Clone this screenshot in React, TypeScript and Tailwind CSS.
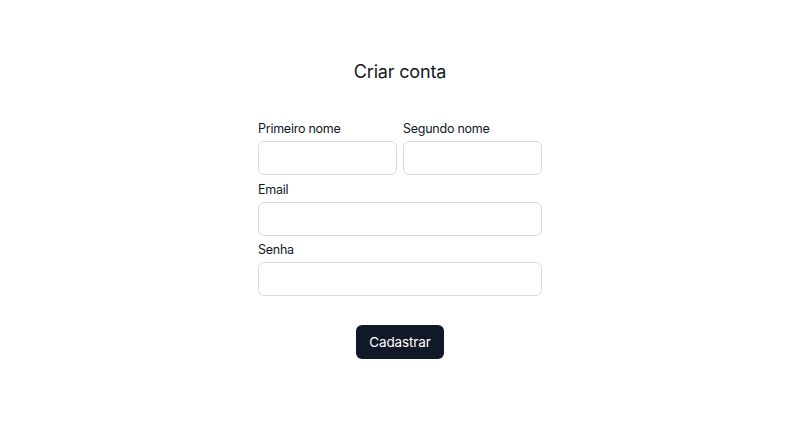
import React from 'react';

function Field({ label, type = 'text' }: { label: string; type?: string }) {
  return (
    <label className="flex flex-col">
      <span className="text-[12.5px] leading-5 tracking-[-0.02em] text-[#0f172a]">{label}</span>
      <input
        type={type}
        className="mt-0.5 h-[34px] w-full rounded-md border border-[#d5dce6] bg-white px-3 text-sm outline-none"
      />
    </label>
  );
}

export default function App() {
  return (
    <div className="min-h-screen bg-white font-['Inter',sans-serif] text-[#111827]">
      <div className="flex flex-col items-center pt-[58px]">
        <h1 className="text-lg leading-7 tracking-[-0.01em]">Criar conta</h1>

        <form className="mt-[33px] flex w-[284px] flex-col gap-[4.5px]">
          <div className="grid grid-cols-2 gap-1.5">
            <Field label="Primeiro nome" />
            <Field label="Segundo nome" />
          </div>
          <Field label="Email" type="email" />
          <Field label="Senha" type="password" />

          <div className="mt-[24.5px] flex justify-center">
            <button
              type="button"
              className="h-[34px] rounded-md bg-[#111827] px-[13px] text-[13.5px] tracking-[-0.01em] text-white"
            >
              Cadastrar
            </button>
          </div>
        </form>
      </div>
    </div>
  );
}
